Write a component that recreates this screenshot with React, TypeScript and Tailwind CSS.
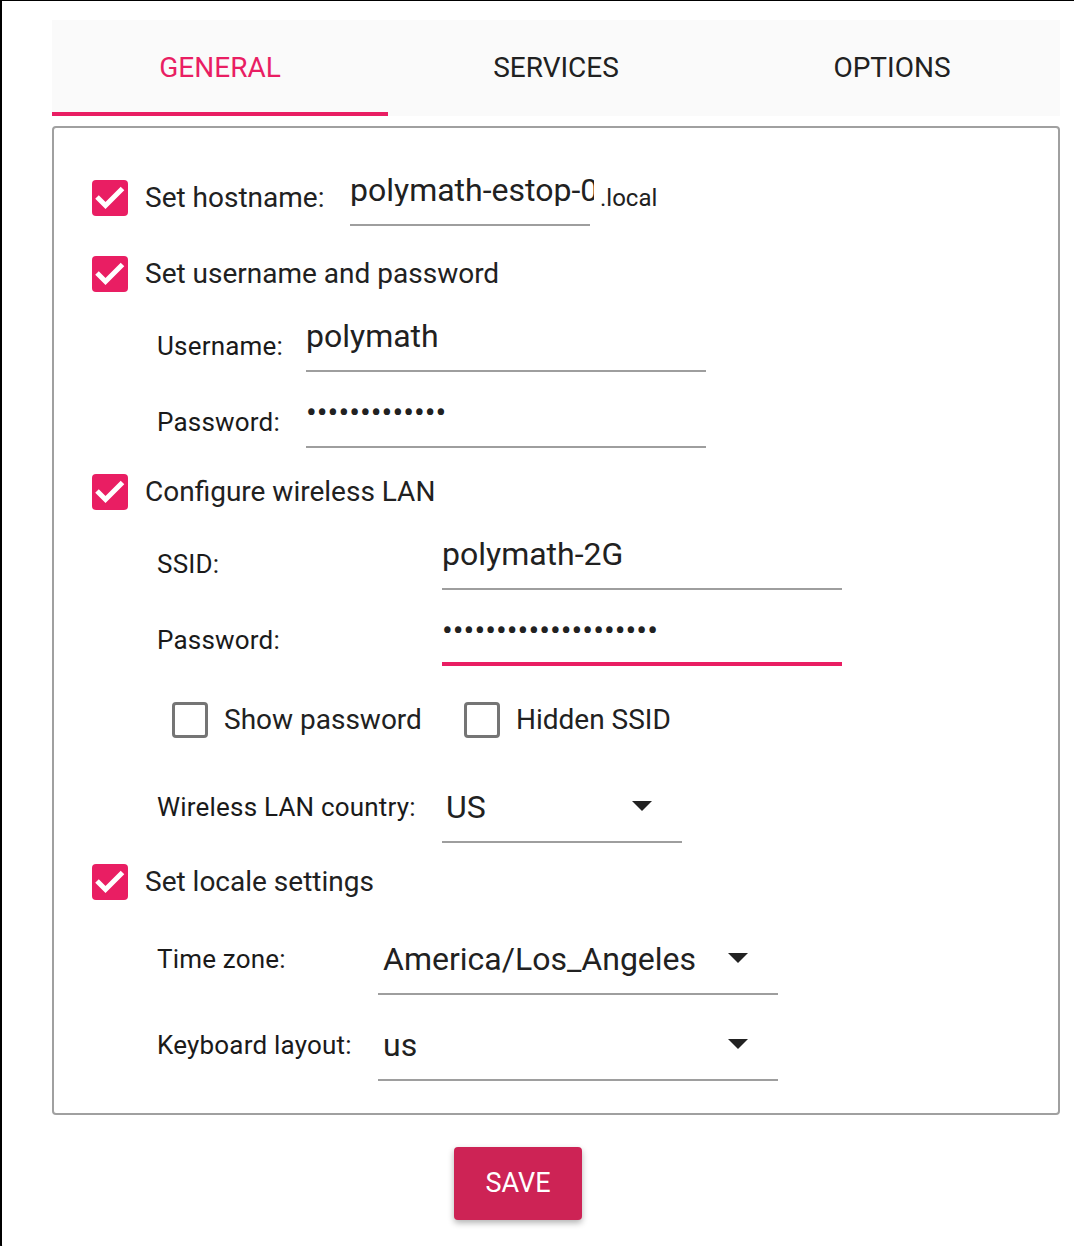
import React from "react";

function CheckedBox() {
  return (
    <div className="w-[36px] h-[36px] rounded-[4px] bg-[#e91e63] flex items-center justify-center shrink-0">
      <svg width="36" height="36" viewBox="0 0 36 36">
        <path d="M5 17L13.5 25.5L30.5 8.5" fill="none" stroke="white" strokeWidth="5" />
      </svg>
    </div>
  );
}

function EmptyBox() {
  return <div className="w-[36px] h-[36px] rounded-[4px] border-[3px] border-[#757575] shrink-0" />;
}

function Arrow() {
  return (
    <svg width="20" height="10" viewBox="0 0 20 10" className="mb-[30px] shrink-0">
      <path d="M0 0H20L10 10Z" fill="#222222" />
    </svg>
  );
}

function Label({ w, pb, children }: { w: string; pb: string; children: React.ReactNode }) {
  return (
    <div className={`${w} ${pb} shrink-0 text-[26px] leading-none tracking-[0.2px] text-[#1a1a1a] whitespace-nowrap`}>
      {children}
    </div>
  );
}

export default function App() {
  return (
    <div className="h-[1246px] overflow-hidden bg-white font-[Roboto,sans-serif] text-[#212121]">
      <div className="h-[1262px] border-l-2 border-t border-b-2 border-black rounded-bl-[18px] pt-[19px] pl-[50px] pr-[14px]">
        {/* Tabs */}
        <div className="flex h-[96px] bg-[#fafafa]">
          <div className="flex-1 flex items-center justify-center border-b-4 border-[#e91e63] text-[28px] leading-none text-[#e91e63] pt-[4px]">
            GENERAL
          </div>
          <div className="flex-1 flex items-center justify-center text-[28px] leading-none text-[#212121]">
            SERVICES
          </div>
          <div className="flex-1 flex items-center justify-center text-[28px] leading-none text-[#212121]">
            OPTIONS
          </div>
        </div>

        {/* Box */}
        <div className="mt-[10px] h-[989px] border-2 border-[#a0a0a0] rounded-[4px] pt-[42px] pl-[38px]">
          {/* hostname */}
          <div className="flex items-center h-[56px]">
            <CheckedBox />
            <span className="ml-[17px] w-[205px] text-[28px] leading-none shrink-0">Set hostname:</span>
            <div className="w-[240px] h-[56px] border-b-2 border-[#9e9e9e] flex items-end pb-[18px] shrink-0">
              <div className="w-[244px] shrink-0 overflow-hidden whitespace-nowrap text-[32px] leading-none">polymath-estop-01</div>
            </div>
            <span className="ml-[10px] self-end mb-[16px] text-[24px] leading-none">.local</span>
          </div>

          {/* username & password */}
          <div className="mt-[28px] flex items-center h-[40px]">
            <CheckedBox />
            <span className="ml-[17px] text-[28px] leading-none">Set username and password</span>
          </div>
          <div className="mt-[2px] flex items-end h-[76px] pl-[65px]">
            <Label w="w-[149px]" pb="pb-[13px]">Username:</Label>
            <div className="w-[400px] h-full border-b-2 border-[#9e9e9e] flex items-end pb-[18px] text-[32px] leading-none">
              polymath
            </div>
          </div>
          <div className="flex items-end h-[76px] pl-[65px]">
            <Label w="w-[149px]" pb="pb-[13px]">Password:</Label>
            <div className="w-[400px] h-full border-b-2 border-[#9e9e9e] flex items-end pb-[18px] text-[32px] leading-none">
              {"•".repeat(13)}
            </div>
          </div>

          {/* wireless */}
          <div className="mt-[24px] flex items-center h-[40px]">
            <CheckedBox />
            <span className="ml-[17px] text-[28px] leading-none">Configure wireless LAN</span>
          </div>
          <div className="mt-[2px] flex items-end h-[76px] pl-[65px]">
            <Label w="w-[285px]" pb="pb-[13px]">SSID:</Label>
            <div className="w-[400px] h-full border-b-2 border-[#9e9e9e] flex items-end pb-[18px] text-[32px] leading-none">
              polymath-2G
            </div>
          </div>
          <div className="flex items-end h-[76px] pl-[65px]">
            <Label w="w-[285px]" pb="pb-[13px]">Password:</Label>
            <div className="w-[400px] h-full border-b-4 border-[#e91e63] flex items-end pb-[16px] text-[32px] leading-none">
              {"•".repeat(20)}
            </div>
          </div>
          <div className="mt-[34px] flex items-center h-[40px] pl-[80px]">
            <EmptyBox />
            <span className="ml-[16px] w-[240px] text-[28px] leading-none">Show password</span>
            <EmptyBox />
            <span className="ml-[16px] text-[28px] leading-none">Hidden SSID</span>
          </div>
          <div className="mt-[27px] flex items-end h-[76px] pl-[65px]">
            <Label w="w-[285px]" pb="pb-[23px]">Wireless LAN country:</Label>
            <div className="w-[240px] h-full border-b-2 border-[#9e9e9e] flex items-end justify-between pl-[4px] pr-[30px]">
              <span className="pb-[18px] text-[32px] leading-none">US</span>
              <Arrow />
            </div>
          </div>

          {/* locale */}
          <div className="mt-[19px] flex items-center h-[40px]">
            <CheckedBox />
            <span className="ml-[17px] text-[28px] leading-none">Set locale settings</span>
          </div>
          <div className="mt-[17px] flex items-end h-[76px] pl-[65px]">
            <Label w="w-[221px]" pb="pb-[23px]">Time zone:</Label>
            <div className="w-[400px] h-full border-b-2 border-[#9e9e9e] flex items-end justify-between pl-[5px] pr-[30px]">
              <span className="pb-[18px] text-[32px] leading-none">America/Los_Angeles</span>
              <Arrow />
            </div>
          </div>
          <div className="mt-[10px] flex items-end h-[76px] pl-[65px]">
            <Label w="w-[221px]" pb="pb-[23px]">Keyboard layout:</Label>
            <div className="w-[400px] h-full border-b-2 border-[#9e9e9e] flex items-end justify-between pl-[5px] pr-[30px]">
              <span className="pb-[18px] text-[32px] leading-none">us</span>
              <Arrow />
            </div>
          </div>
        </div>

        {/* Save */}
        <div className="mt-[32px] ml-[402px] w-[128px] h-[73px] rounded-[4px] bg-[#cd2355] shadow-[0_3px_6px_rgba(0,0,0,0.3)] flex items-center justify-center text-white text-[27px] leading-none">
          SAVE
        </div>
      </div>
    </div>
  );
}
